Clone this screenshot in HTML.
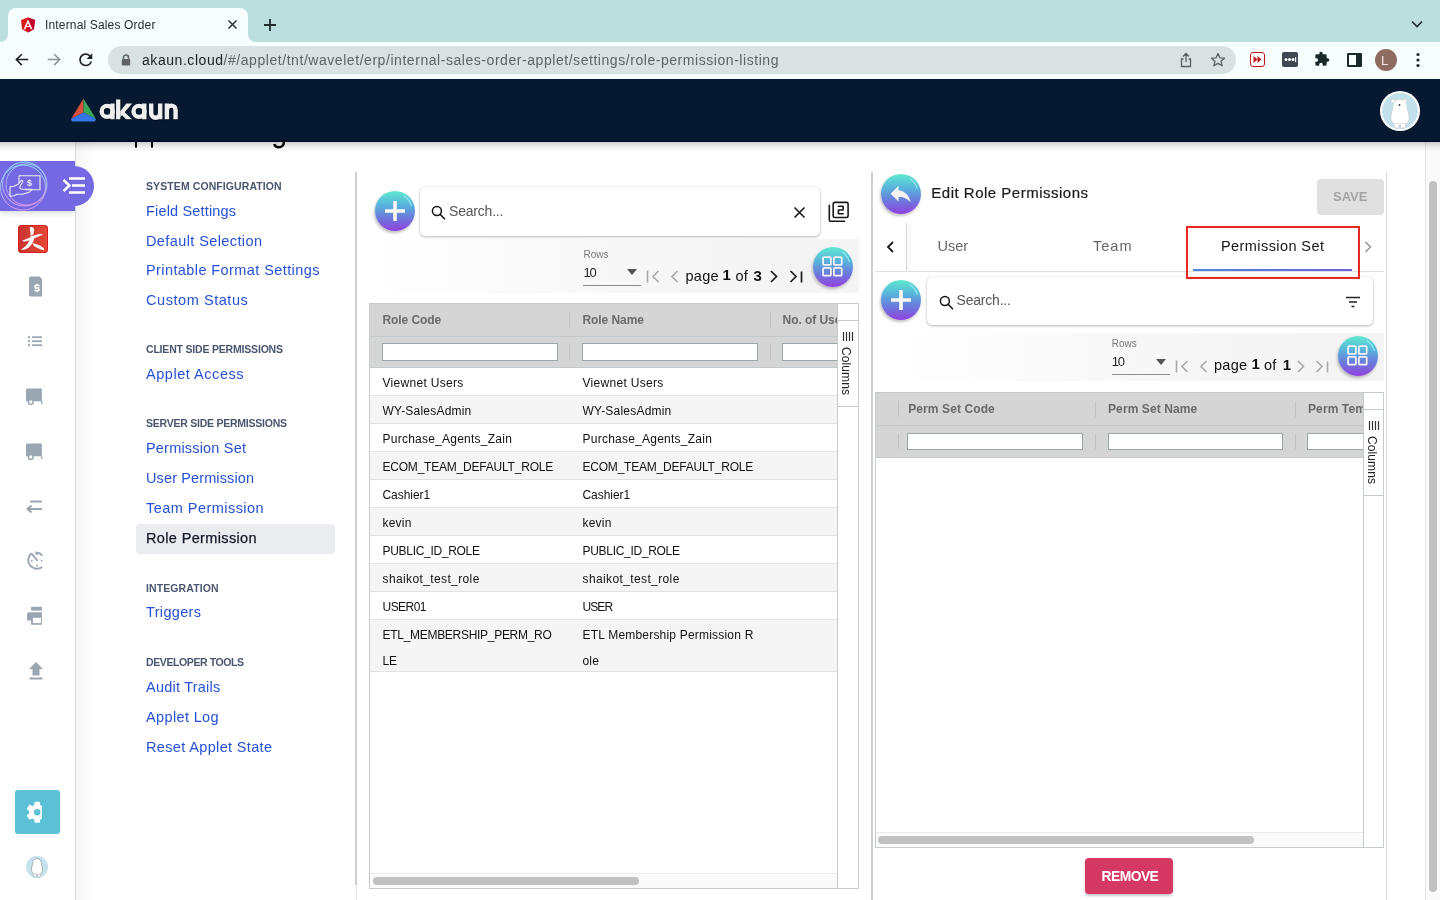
<!DOCTYPE html>
<html><head><meta charset="utf-8">
<style>
*{box-sizing:border-box;margin:0;padding:0}
html,body{width:1440px;height:900px;overflow:hidden;background:#fff;font-family:"Liberation Sans",sans-serif;position:relative}
body{will-change:transform}
.a{position:absolute}
.t{position:absolute;white-space:nowrap;line-height:1}
/* chrome */
#tabbar{left:0;top:0;width:1440px;height:42px;background:#bbdfdf}
#tab{left:8px;top:8px;width:240px;height:36px;background:#f5fdfd;border-radius:8px 8px 0 0}
#toolbar{left:0;top:42px;width:1440px;height:37px;background:#f5fdfd}
#url{left:108px;top:46px;width:1128px;height:28px;background:#d9e2e2;border-radius:14px}
#hdr{left:0;top:79px;width:1440px;height:63.4px;background:linear-gradient(180deg,#071931 0,#071931 95%,#020a24 100%);z-index:5}
#hsh{left:0;top:142.4px;width:1440px;height:10px;background:linear-gradient(180deg,rgba(0,0,0,.2),rgba(0,0,0,.06) 50%,rgba(0,0,0,0));z-index:6}
/* rail */
#rail{left:0;top:142px;width:76px;height:758px;background:#fff;border-right:1px solid #dedede}
.nav{font-size:14.5px;color:#2551d6}
.sec{font-size:10.5px;font-weight:bold;color:#4a5670}
.line{background:#d0d0d0}
.fab{width:40px;height:40px;border-radius:50%;background:linear-gradient(180deg,#5fe9cf 0%,#58b3dc 35%,#6a7ddc 65%,#9141df 100%);box-shadow:-1px 2px 3px rgba(0,0,0,.25)}
.card{background:#fff;border-radius:5px;box-shadow:0 1px 3px rgba(0,0,0,.28),0 0 1px rgba(0,0,0,.15)}
.ph{font-size:14px;color:#555;letter-spacing:-.2px}
.band{background:linear-gradient(90deg,rgba(244,244,244,0) 0%,rgba(244,244,244,.6) 40%,#f4f4f4 85%,#f4f4f4 100%)}
.rows{font-size:10px;color:#777}
.sel{font-size:13px;color:#222;letter-spacing:-1.2px}
.pg{font-size:14.5px;color:#111;letter-spacing:.3px}
.pgb{font-size:15px;font-weight:bold;color:#111}
.grid{border:1px solid #c6cbd0;background:#fff;overflow:hidden}
.gh{background:#d5d5d5}
.tab{font-size:14.5px}

.ghd{font-size:12px;font-weight:bold;color:#6a6a6a}
.gc{font-size:12px;color:#111}
.fin{background:#fff;border:1px solid #9aa6a6}
.colv{font-size:12px;color:#222;writing-mode:vertical-rl;letter-spacing:.1px}


</style></head>
<body>
<!-- ===== browser chrome ===== -->
<div id="tabbar" class="a"></div>
<div id="tab" class="a"></div>
<div class="a" style="left:0;top:34px;width:8px;height:8px;background:#f5fdfd"></div>
<div class="a" style="left:0;top:26px;width:8px;height:16px;background:#bbdfdf;border-radius:0 0 8px 0"></div>
<div class="a" style="left:248px;top:34px;width:8px;height:8px;background:#f5fdfd"></div>
<div class="a" style="left:248px;top:26px;width:8px;height:16px;background:#bbdfdf;border-radius:0 0 0 8px"></div>
<div id="toolbar" class="a"></div>
<!-- angular icon -->
<svg class="a" style="left:20px;top:17px" width="16" height="16" viewBox="0 0 16 16"><path d="M8 0.5L15 3l-1.1 9.3L8 15.6 2.1 12.3 1 3z" fill="#dd1b16"/><path d="M8 0.5L15 3l-1.1 9.3L8 15.6z" fill="#c3002f"/><path d="M8 2.4L3.6 12.2h1.7l.9-2.2h3.7l.9 2.2h1.7zM8 6l1.3 2.9H6.7z" fill="#fff"/></svg>
<div class="t" style="left:45px;top:19px;font-size:12px;letter-spacing:.16px;color:#1f2a2a">Internal Sales Order</div>
<svg class="a" style="left:227px;top:19px" width="11" height="11" viewBox="0 0 11 11"><path d="M1.5 1.5l8 8M9.5 1.5l-8 8" stroke="#1d2b2b" stroke-width="1.4"/></svg>
<svg class="a" style="left:263px;top:18px" width="14" height="14" viewBox="0 0 14 14"><path d="M7 1v12M1 7h12" stroke="#1d2b2b" stroke-width="1.8"/></svg>
<svg class="a" style="left:1410px;top:19px" width="14" height="10" viewBox="0 0 14 10"><path d="M2 2.5l5 5 5-5" stroke="#1d2b2b" stroke-width="1.6" fill="none"/></svg>
<!-- nav buttons -->
<svg class="a" style="left:14px;top:52px" width="16" height="16" viewBox="0 0 16 16"><path d="M14.2 7.6H2.5M7.8 2.2L2.3 7.6l5.5 5.5" stroke="#1f1f1f" stroke-width="1.5" fill="none"/></svg>
<svg class="a" style="left:46px;top:52px" width="16" height="16" viewBox="0 0 16 16"><path d="M1.8 7.6h11.7M8.2 2.2l5.5 5.4-5.5 5.5" stroke="#8a9494" stroke-width="1.5" fill="none"/></svg>
<svg class="a" style="left:76.4px;top:50.4px" width="19.5" height="19.5" viewBox="0 0 24 24"><path d="M17.65 6.35A7.958 7.958 0 0 0 12 4c-4.42 0-7.99 3.58-7.99 8s3.57 8 7.99 8c3.73 0 6.84-2.55 7.73-6h-2.08A5.99 5.99 0 0 1 12 18c-3.31 0-6-2.69-6-6s2.69-6 6-6c1.66 0 3.14.69 4.22 1.78L13 11h7V4l-2.35 2.35z" fill="#1f1f1f"/></svg>
<div id="url" class="a"></div>
<svg class="a" style="left:121px;top:54px" width="10" height="12" viewBox="0 0 10 12"><path d="M2.5 5V3.5a2.5 2.5 0 0 1 5 0V5" stroke="#5f6363" stroke-width="1.5" fill="none"/><rect x="0.8" y="5" width="8.4" height="6.6" rx="1" fill="#5f6363"/></svg>
<div class="t" style="left:142px;top:53px;font-size:14px;letter-spacing:.55px;color:#202424"><span>akaun.cloud</span><span style="color:#5e6464">/#/applet/tnt/wavelet/erp/internal-sales-order-applet/settings/role-permission-listing</span></div>
<svg class="a" style="left:1178px;top:52px" width="16" height="16" viewBox="0 0 16 16"><path d="M8 10V2M5 4.5L8 1.5l3 3M5.5 7H3.5v7.5h9V7h-2" stroke="#5a6060" stroke-width="1.3" fill="none"/></svg>
<svg class="a" style="left:1210px;top:52px" width="16" height="16" viewBox="0 0 16 16"><path d="M8 1.5l1.9 4.3 4.6.4-3.5 3 1.1 4.6L8 11.4l-4.1 2.4 1.1-4.6-3.5-3 4.6-.4z" stroke="#5a6060" stroke-width="1.3" fill="none" stroke-linejoin="round"/></svg>
<!-- extensions -->
<div class="a" style="left:1250px;top:52px;width:15px;height:15px;border:1.6px solid #c5161d;border-radius:3px;background:#fff"></div>
<svg class="a" style="left:1252px;top:55px" width="11" height="9" viewBox="0 0 11 9"><path d="M1.5 1l4 3.5-4 3.5zM5.5 1l4 3.5-4 3.5z" fill="#c5161d"/></svg>
<div class="a" style="left:1282px;top:52px;width:16px;height:15px;background:#3d4852;border-radius:2px"></div>
<svg class="a" style="left:1283px;top:56px" width="14" height="7" viewBox="0 0 14 7"><circle cx="3" cy="3.5" r="1.5" fill="#fff"/><circle cx="6.5" cy="3.5" r="1.5" fill="#fff"/><circle cx="10" cy="3.5" r="1.5" fill="#fff"/><rect x="12" y="1" width="1.2" height="5" fill="#fff"/></svg>
<svg class="a" style="left:1314px;top:51px" width="16" height="16" viewBox="0 0 24 24"><path d="M20.5 11H19V7a2 2 0 0 0-2-2h-4V3.5a2.5 2.5 0 0 0-5 0V5H4a2 2 0 0 0-2 2v3.8h1.5a2.7 2.7 0 0 1 0 5.4H2V20a2 2 0 0 0 2 2h3.8v-1.5a2.7 2.7 0 0 1 5.4 0V22H17a2 2 0 0 0 2-2v-4h1.5a2.5 2.5 0 0 0 0-5z" fill="#1a2a2a"/></svg>
<div class="a" style="left:1347px;top:53px;width:15px;height:14px;border:2px solid #1a2a2a;border-right-width:6px;border-radius:1px"></div>
<div class="a" style="left:1375px;top:49px;width:22px;height:22px;border-radius:50%;background:#8d6b5f"></div>
<div class="t" style="left:1381px;top:54px;font-size:13px;color:#f5ecea">L</div>
<svg class="a" style="left:1415px;top:52px" width="6" height="16" viewBox="0 0 6 16"><circle cx="3" cy="2.5" r="1.6" fill="#1a2a2a"/><circle cx="3" cy="8" r="1.6" fill="#1a2a2a"/><circle cx="3" cy="13.5" r="1.6" fill="#1a2a2a"/></svg>

<!-- ===== app header ===== -->
<div id="hdr" class="a">
  <svg class="a" style="left:70px;top:19px" width="27" height="25" viewBox="0 0 27 25"><path d="M13.5 0.5L1 21 13.5 14.5z" fill="#d8503a"/><path d="M13.5 0.5L26 21 13.5 14.5z" fill="#3aa85a"/><path d="M1 21L13.5 14.5 26 21 25 23.5H2z" fill="#3476e8"/></svg>
  <svg class="a" style="left:98px;top:18px" width="84" height="26" viewBox="0 0 84 26"><g transform="translate(.7 .9)" stroke="#000" fill="#000" opacity=".55">
<circle cx="9.2" cy="14.4" r="5.5" stroke-width="4.4" fill="none"/><path d="M14.5 6.5V22.3" stroke-width="4.4"/>
<path d="M20.2 2.5V22.3" stroke-width="4.3"/><path d="M22.3 14.2L28.3 6.5H34.2L22.3 20.2z" stroke="none"/><path d="M24.6 13.2L34 22.3H28L22.3 16.6z" stroke="none"/>
<circle cx="41" cy="14.4" r="5.5" stroke-width="4.4" fill="none"/><path d="M46.3 6.5V22.3" stroke-width="4.4"/>
<path d="M53.2 6.5V16.2A4.5 4.5 0 0 0 62.2 16.2V6.5M62.2 14V22.3" stroke-width="4.4" fill="none"/>
<path d="M68.9 22.3V6.5M68.9 13A4.35 4.35 0 0 1 77.6 13V22.3" stroke-width="4.4" fill="none"/>
</g><g stroke="#eeeeee" fill="#eeeeee">
<circle cx="9.2" cy="14.4" r="5.5" stroke-width="4.4" fill="none"/><path d="M14.5 6.5V22.3" stroke-width="4.4"/>
<path d="M20.2 2.5V22.3" stroke-width="4.3"/><path d="M22.3 14.2L28.3 6.5H34.2L22.3 20.2z" stroke="none"/><path d="M24.6 13.2L34 22.3H28L22.3 16.6z" stroke="none"/>
<circle cx="41" cy="14.4" r="5.5" stroke-width="4.4" fill="none"/><path d="M46.3 6.5V22.3" stroke-width="4.4"/>
<path d="M53.2 6.5V16.2A4.5 4.5 0 0 0 62.2 16.2V6.5M62.2 14V22.3" stroke-width="4.4" fill="none"/>
<path d="M68.9 22.3V6.5M68.9 13A4.35 4.35 0 0 1 77.6 13V22.3" stroke-width="4.4" fill="none"/>
</g></svg>
  <div class="a" style="left:1380px;top:12px;width:40px;height:40px;border-radius:50%;background:#fff"></div>
  <div class="a" style="left:1382px;top:14px;width:36px;height:36px;border-radius:50%;background:#c2e1ea"></div>
  <svg class="a" style="left:1388px;top:17.5px" width="24" height="34" viewBox="0 0 24 34"><circle cx="5" cy="4" r="2" fill="#fff" stroke="#bbb" stroke-width=".5"/><circle cx="17" cy="4" r="2" fill="#fff" stroke="#bbb" stroke-width=".5"/><path d="M12 2.5c5 0 7 3.5 7 8 0 2 2 5 2 10 0 5-3 8-9 8s-9-3-9-8c0-5 2-8 2-10 0-4.5 2-8 7-8z" fill="#fff" stroke="#ccc" stroke-width=".6"/><rect x="6" y="26.5" width="5" height="4.5" rx="1" fill="#fff" stroke="#bbb" stroke-width=".5"/><rect x="12.5" y="26.5" width="5" height="4.5" rx="1" fill="#fff" stroke="#bbb" stroke-width=".5"/><circle cx="11.5" cy="8" r=".9" fill="#333"/></svg>
</div>

<!-- page title descenders (hidden under header) -->
<div id="hsh" class="a"></div>
<div class="a" style="left:134.6px;top:142.4px;width:2.6px;height:5.3px;background:#000;border-radius:0 0 1px 1px;z-index:7"></div>
<div class="a" style="left:150.9px;top:142.4px;width:2.6px;height:5.3px;background:#000;border-radius:0 0 1px 1px;z-index:7"></div>
<svg class="a" style="left:271px;top:140px;z-index:7" width="16" height="9" viewBox="0 0 16 9"><path d="M12.8 1v1.5c0 2.8-2.2 4.8-5 4.8-2.3 0-4-1.3-4.6-3.2" stroke="#000" stroke-width="2.5" fill="none"/></svg>

<!-- ===== left rail ===== -->
<div id="rail" class="a"></div>
<div class="a" style="left:76px;top:142px;width:22px;height:758px;background:linear-gradient(90deg,rgba(0,0,0,.035),rgba(0,0,0,0))"></div>
<!-- purple applet block -->
<div class="a" style="left:0;top:161px;width:75px;height:50px;background:#7469e3;box-shadow:0 3px 5px rgba(0,0,0,.12)"></div>
<div class="a" style="left:55px;top:166px;width:39px;height:40px;background:#7469e3;border-radius:0 20px 20px 0"></div>
<svg class="a" style="left:0;top:161px" width="52" height="50" viewBox="0 0 52 50" overflow="visible">
 <defs><linearGradient id="rg" x1="0" y1="0" x2="0" y2="1"><stop offset="0" stop-color="#8fe3f5"/><stop offset=".5" stop-color="#a8b8f0"/><stop offset="1" stop-color="#e49cf0"/></linearGradient></defs>
 <circle cx="24.5" cy="23" r="22" fill="none" stroke="url(#rg)" stroke-width="1"/>
 <circle cx="23" cy="26.5" r="22.5" fill="none" stroke="url(#rg)" stroke-width="1"/>
 <circle cx="26.5" cy="23.5" r="20.5" fill="none" stroke="url(#rg)" stroke-width=".9"/>
 <g transform="translate(0 4.3)"> <path d="M19 10.5h21v14H25" stroke="#eee" stroke-width="1.1" fill="none"/>
 <path d="M19 10.5v7" stroke="#eee" stroke-width="1.1"/>
 <path d="M10 21.5l4-.5 4-2 3-3.5c1.2-1 2.3 0 1.5 1.5l-2.5 4c-.5 1.5 .5 3 2.5 3H32l-3 3-6 2h-6l-3 1.5-4 .5z" stroke="#eee" stroke-width="1.1" fill="none" stroke-linejoin="round"/>
 <text x="27" y="21" font-family="Liberation Sans" font-size="9" font-weight="bold" fill="#eee">$</text></g>
</svg>
<svg class="a" style="left:62px;top:177px" width="24" height="17" viewBox="0 0 24 17"><path d="M1.5 3l6 5.5-6 5.5" stroke="#fff" stroke-width="2.4" fill="none"/><path d="M7 1.5h16M10 8.5h13M7 15.5h16" stroke="#fff" stroke-width="2.6"/></svg>
<!-- red app icon -->
<div class="a" style="left:18.4px;top:224.7px;width:29.4px;height:28.4px;border-radius:4px;background:linear-gradient(90deg,#c93232,#e54a35);box-shadow:inset 0 0 0 1px #d81e1e"></div>
<svg class="a" style="left:18.4px;top:224.7px" width="30" height="29" viewBox="0 0 30 29"><path d="M12 2.2C14 1.6 16.4 3 16.1 5L15.3 9.6 12.5 10.2C12.9 7.5 11.6 4.6 12 2.2z" fill="#fff"/><path d="M4.2 15.6C8 14.6 13 12.1 16 10.6 19 9.2 22 8.8 25.2 9 23.6 10.6 20 11.6 17 12.9 14 14.1 10 15.6 6 16.7z" fill="#fff"/><path d="M12.8 10.5L16.6 11C16.1 16 13.6 21 9.1 23.6 7 24.7 5 25.1 3.2 24.9 4.5 23.5 6.6 22 8.6 20 10.6 17.5 12.2 14 12.8 10.5z" fill="#fff"/><path d="M14.4 18.3C18 18.6 22 20.4 24.6 22.3 25.7 23.2 26.4 24.3 26.3 25.3 23 24.9 19.5 23 16.2 21.2z" fill="#fff"/></svg>
<!-- rail icons -->
<svg class="a" style="left:28px;top:275.5px" width="15" height="21" viewBox="0 0 15 21"><path d="M1 2.5a2 2 0 0 1 2-2h8.5l2.5 2.5v17.5H3a2 2 0 0 1-2-2z" fill="#9aa6b2"/><path d="M6.5 9.5h5M7.25 9.5v2.8M6.5 12h5M10.75 12v2.8M6.5 14.5h5M9 7.8v1.7M9 14.5v1.7" stroke="#fff" stroke-width="1.5" fill="none"/></svg>
<svg class="a" style="left:28px;top:335.5px" width="15" height="12" viewBox="0 0 15 12"><rect x="0" y="0.2" width="2" height="2" fill="#9aa6b2"/><rect x="0" y="4.2" width="2" height="2" fill="#9aa6b2"/><rect x="0" y="8.2" width="2" height="2" fill="#9aa6b2"/><rect x="4" y="0.3" width="10" height="1.8" fill="#9aa6b2"/><rect x="4" y="4.3" width="10" height="1.8" fill="#9aa6b2"/><rect x="4" y="8.3" width="10" height="1.8" fill="#9aa6b2"/></svg>
<svg class="a" style="left:25px;top:387.5px" width="18" height="17" viewBox="0 0 18 17"><path d="M1 2a1.5 1.5 0 0 1 1.5-1.5h14.3v12.7H1z" fill="#9aa6b2"/><circle cx="5.8" cy="14" r="2.4" fill="#fff" stroke="#9aa6b2" stroke-width="1.5"/><path d="M16.2 13.2l1 2.8" stroke="#9aa6b2" stroke-width="1.4" fill="none"/></svg>
<svg class="a" style="left:25px;top:442.5px" width="18" height="17" viewBox="0 0 18 17"><path d="M1 2a1.5 1.5 0 0 1 1.5-1.5h14.3v12.7H1z" fill="#9aa6b2"/><circle cx="5.8" cy="14" r="2.4" fill="#fff" stroke="#9aa6b2" stroke-width="1.5"/><path d="M16.2 13.2l1 2.8" stroke="#9aa6b2" stroke-width="1.4" fill="none"/></svg>
<svg class="a" style="left:26px;top:500px" width="17" height="14" viewBox="0 0 17 14"><path d="M4 1.5h12M2 9h14" stroke="#9aa6b2" stroke-width="2"/><path d="M5.5 5.5L1.5 9l4 3.5" stroke="#9aa6b2" stroke-width="2" fill="none"/></svg>
<svg class="a" style="left:27px;top:551px" width="17" height="20" viewBox="0 0 17 20"><path d="M4.6 2.3A8 8 0 1 0 15.2 16" stroke="#9aa6b2" stroke-width="1.9" fill="none"/><path d="M4.6 2.6l6 7.2" stroke="#9aa6b2" stroke-width="1.9"/><path d="M9.5 4V1.5A8 8 0 0 1 15.3 4.6" stroke="#9aa6b2" stroke-width="1.9" fill="none"/><rect x="4" y="8.8" width="1.7" height="1.7" fill="#9aa6b2"/><rect x="9" y="13.8" width="1.7" height="1.7" fill="#9aa6b2"/><rect x="13.8" y="8.8" width="1.6" height="1.7" fill="#9aa6b2"/></svg>
<svg class="a" style="left:26px;top:606px" width="17" height="20" viewBox="0 0 17 20"><rect x="5.1" y="0.8" width="10.8" height="3.8" fill="#9aa6b2"/><path d="M1 8.2a2 2 0 0 1 2-2h12.9v12.5H5.1v-4.2H1z" fill="#9aa6b2"/><rect x="6.9" y="11.8" width="8.1" height="5.3" fill="#fff"/></svg>
<svg class="a" style="left:29px;top:662px" width="14" height="18" viewBox="0 0 14 18"><path d="M7 0L0 7h3.5v6.5h7V7H14z" fill="#9aa6b2"/><rect x="0.5" y="15.5" width="13" height="2" fill="#9aa6b2"/></svg>
<!-- settings button -->
<div class="a" style="left:15px;top:790px;width:45px;height:44px;border-radius:3px;background:#5cc0d6"></div>
<div class="a" style="left:23.7px;top:799.1px;width:18.4px;height:27px;overflow:hidden"><svg width="26.4" height="26.4" viewBox="0 0 24 24"><path d="M19.14 12.94c.04-.3.06-.61.06-.94 0-.32-.02-.64-.07-.94l2.03-1.58c.18-.14.23-.41.12-.61l-1.92-3.32c-.12-.22-.37-.29-.59-.22l-2.39.96c-.5-.38-1.03-.7-1.620-.94l-.36-2.54c-.04-.24-.24-.41-.48-.41h-3.84c-.24 0-.43.17-.47.41l-.36 2.54c-.59.24-1.13.57-1.62.94l-2.39-.96c-.22-.08-.47 0-.59.22L2.74 8.87c-.12.21-.08.47.12.61l2.03 1.58c-.05.3-.09.63-.09.94s.02.64.07.94l-2.03 1.58c-.18.14-.23.41-.12.61l1.92 3.32c.12.22.37.29.59.22l2.39-.96c.5.38 1.03.7 1.62.94l.36 2.54c.05.24.24.41.48.41h3.840c.24 0 .44-.17.47-.41l.36-2.54c.59-.24 1.13-.56 1.62-.94l2.39.96c.22.08.47 0 .59-.22l1.92-3.32c.12-.22.07-.47-.12-.61l-2.01-1.58z" fill="#fff"/><circle cx="12" cy="12" r="2.9" fill="#5cc0d6"/></svg></div>
<div class="a" style="left:26px;top:856px;width:22px;height:22px;border-radius:50%;background:#c5e3ec"></div>
<svg class="a" style="left:30px;top:857px" width="14" height="21" viewBox="0 0 14 21"><path d="M7 1.5c3 0 4.3 2.3 4.3 5 0 1.3 1.2 3 1.2 6 0 3.5-2 5.5-5.5 5.5S1.5 16 1.5 12.5c0-3 1.2-4.7 1.2-6 0-2.7 1.3-5 4.3-5z" fill="#fff" stroke="#777" stroke-width=".5"/><rect x="3.5" y="17" width="3" height="2.8" rx=".6" fill="#fff" stroke="#888" stroke-width=".4"/><rect x="7.5" y="17" width="3" height="2.8" rx=".6" fill="#fff" stroke="#888" stroke-width=".4"/></svg>

<!-- ===== settings nav ===== -->
<div class="a" style="left:355px;top:172px;width:2px;height:713px;background:#cfcfcf"></div>
<div class="a" style="left:356px;top:885px;width:1px;height:15px;background:#e6e6e6"></div>
<div class="t sec" style="left:146px;top:180.8px;letter-spacing:.09px">SYSTEM CONFIGURATION</div>
<div class="t nav" style="left:146px;top:203.5px;letter-spacing:.17px">Field Settings</div>
<div class="t nav" style="left:146px;top:233.5px;letter-spacing:.4px">Default Selection</div>
<div class="t nav" style="left:146px;top:263px;letter-spacing:.41px">Printable Format Settings</div>
<div class="t nav" style="left:146px;top:293.2px;letter-spacing:.56px">Custom Status</div>
<div class="t sec" style="left:146px;top:344.4px;letter-spacing:-.19px">CLIENT SIDE PERMISSIONS</div>
<div class="t nav" style="left:146px;top:366.7px;letter-spacing:.54px">Applet Access</div>
<div class="t sec" style="left:146px;top:418.1px;letter-spacing:-.24px">SERVER SIDE PERMISSIONS</div>
<div class="t nav" style="left:146px;top:440.7px;letter-spacing:.19px">Permission Set</div>
<div class="t nav" style="left:146px;top:471.3px;letter-spacing:.12px">User Permission</div>
<div class="t nav" style="left:146px;top:501.3px;letter-spacing:.46px">Team Permission</div>
<div class="a" style="left:136px;top:524px;width:199px;height:29.6px;border-radius:4px;background:#ebecf0"></div>
<div class="t nav" style="left:146px;top:530.7px;letter-spacing:.36px;color:#111827;-webkit-text-stroke:.25px #111827">Role Permission</div>
<div class="t sec" style="left:146px;top:582.5px;letter-spacing:.1px">INTEGRATION</div>
<div class="t nav" style="left:146px;top:605.3px;letter-spacing:.34px">Triggers</div>
<div class="t sec" style="left:146px;top:656.5px;letter-spacing:-.4px">DEVELOPER TOOLS</div>
<div class="t nav" style="left:146px;top:679.7px;letter-spacing:.23px">Audit Trails</div>
<div class="t nav" style="left:146px;top:710.1px;letter-spacing:.36px">Applet Log</div>
<div class="t nav" style="left:146px;top:739.8px;letter-spacing:.35px">Reset Applet State</div>

<!-- ===== middle panel ===== -->
<div class="a fab" style="left:375px;top:191px"><svg width="40" height="40" viewBox="0 0 40 40"><path d="M20 10v20M10 20h20" stroke="#fbf8f4" stroke-width="3.6"/><path d="M28.8 4.6A17.5 17.5 0 0 1 36.4 14.8" stroke="#a8f5f5" stroke-width="1.1" fill="none" opacity=".85"/></svg></div>
<div class="a card" style="left:420px;top:187px;width:400px;height:49px"></div>
<svg class="a" style="left:431px;top:205px" width="15" height="15" viewBox="0 0 15 15"><circle cx="5.9" cy="6" r="4.5" stroke="#111" stroke-width="1.5" fill="none"/><path d="M9.1 9.3l4.4 4.5" stroke="#111" stroke-width="1.6" stroke-linecap="round"/></svg>
<div class="t ph" style="left:449px;top:204.3px">Search...</div>
<svg class="a" style="left:793px;top:206.3px" width="13" height="13" viewBox="0 0 13 13"><path d="M1.5 1.5l10 10M11.5 1.5l-10 10" stroke="#1a1a1a" stroke-width="1.6"/></svg>
<svg class="a" style="left:827px;top:200px" width="24" height="24" viewBox="0 0 24 24"><path d="M2.3 5.2V20a1.2 1.2 0 0 0 1.2 1.2h14.1" stroke="#1a1a1a" stroke-width="1.6" fill="none" stroke-linecap="round"/><rect x="6.2" y="2.4" width="14.9" height="15.1" rx="1.6" stroke="#1a1a1a" stroke-width="1.6" fill="none"/><path d="M11.4 6.2h4.7v3.8h-4.7v3.7h4.8" stroke="#1a1a1a" stroke-width="1.6" fill="none" stroke-linecap="round" stroke-linejoin="round"/></svg>
<div class="a band" style="left:370px;top:239px;width:489px;height:54px"></div>
<div class="t rows" style="left:583.5px;top:250px">Rows</div>
<div class="t sel" style="left:583.5px;top:266px">10</div>
<svg class="a" style="left:627px;top:269px" width="10" height="6" viewBox="0 0 10 6"><path d="M0 0h10L5 6z" fill="#555"/></svg>
<div class="a" style="left:583px;top:284.5px;width:58px;height:1px;background:#8a8a8a"></div>
<svg class="a" style="left:646px;top:270px" width="14" height="13" viewBox="0 0 14 13"><path d="M1.5 .5v12" stroke="#a8a8a8" stroke-width="1.6"/><path d="M12.5 1l-5.5 5.5 5.5 5.5" stroke="#a8a8a8" stroke-width="1.6" fill="none"/></svg>
<svg class="a" style="left:670px;top:270px" width="9" height="13" viewBox="0 0 9 13"><path d="M7.5 1l-5.5 5.5 5.5 5.5" stroke="#a8a8a8" stroke-width="1.6" fill="none"/></svg>
<div class="t pg" style="left:685.5px;top:269px">page</div>
<div class="t pgb" style="left:722.5px;top:266.5px">1</div>
<div class="t pg" style="left:735.5px;top:269px">of</div>
<div class="t pgb" style="left:753.5px;top:268px">3</div>
<svg class="a" style="left:769px;top:270px" width="10" height="13" viewBox="0 0 10 13"><path d="M2 1l5.5 5.5L2 12" stroke="#1a1a1a" stroke-width="1.7" fill="none"/></svg>
<svg class="a" style="left:789px;top:270px" width="15" height="13" viewBox="0 0 15 13"><path d="M1.5 1L7 6.5 1.5 12" stroke="#1a1a1a" stroke-width="1.7" fill="none"/><path d="M12.5 1.5v11" stroke="#1a1a1a" stroke-width="1.7"/></svg>
<div class="a fab" style="left:813px;top:247px"><svg width="40" height="40" viewBox="0 0 40 40"><rect x="10.1" y="10.1" width="7.8" height="7.8" rx="1" stroke="#f2f2f6" stroke-width="1.8" fill="none"/><rect x="20.9" y="10.1" width="7.8" height="7.8" rx="1" stroke="#f2f2f6" stroke-width="1.8" fill="none"/><rect x="10.1" y="20.9" width="7.8" height="7.8" rx="1" stroke="#f2f2f6" stroke-width="1.8" fill="none"/><rect x="20.9" y="20.9" width="7.8" height="7.8" rx="1" stroke="#f2f2f6" stroke-width="1.8" fill="none"/><path d="M28.8 4.6A17.5 17.5 0 0 1 36.4 14.8" stroke="#a8f5f5" stroke-width="1.1" fill="none" opacity=".85"/></svg></div>

<!-- grid 1 -->
<div class="a grid" style="left:369px;top:302.5px;width:490px;height:586px">
<div class="a" style="left:0;top:0;width:466.5px;height:100%;overflow:hidden">
<div class="a gh" style="left:0;top:0;width:600px;height:32.3px"></div>
<div class="a" style="left:0;top:32.3px;width:600px;height:1px;background:#c3c8cc"></div>
<div class="a gh" style="left:0;top:33.3px;width:600px;height:30.4px"></div>
<div class="a" style="left:0;top:63.7px;width:600px;height:1px;background:#c3c8cc"></div>
<div class="a" style="left:199.4px;top:8.0px;width:1px;height:16px;background:#c2c2c2"></div>
<div class="a" style="left:199.4px;top:40.5px;width:1px;height:15.5px;background:#c2c2c2"></div>
<div class="a" style="left:399.6px;top:8.0px;width:1px;height:16px;background:#c2c2c2"></div>
<div class="a" style="left:399.6px;top:40.5px;width:1px;height:15.5px;background:#c2c2c2"></div>
<div class="t ghd" style="left:12.5px;top:10.54px;letter-spacing:-.07px">Role Code</div>
<div class="t ghd" style="left:212.5px;top:10.54px;letter-spacing:-.07px">Role Name</div>
<div class="t ghd" style="left:412.6px;top:10.54px;letter-spacing:-.07px">No. of Users</div>
<div class="a fin" style="left:12px;top:39.5px;width:175.8px;height:17.8px"></div>
<div class="a fin" style="left:212.2px;top:39.5px;width:175.6px;height:17.8px"></div>
<div class="a fin" style="left:412.2px;top:39.5px;width:177.8px;height:17.8px"></div>
<div class="a" style="left:0;top:64.7px;width:600px;height:27.6px;background:#fff;border-bottom:1px solid #e2e2e2"></div>
<div class="t gc" style="left:12.5px;top:73.04px;letter-spacing:0.3px">Viewnet Users</div>
<div class="t gc" style="left:212.5px;top:73.04px;letter-spacing:0.3px">Viewnet Users</div>
<div class="a" style="left:0;top:92.7px;width:600px;height:27.6px;background:#f5f5f5;border-bottom:1px solid #e2e2e2"></div>
<div class="t gc" style="left:12.5px;top:101.04px;letter-spacing:0.21px">WY-SalesAdmin</div>
<div class="t gc" style="left:212.5px;top:101.04px;letter-spacing:0.21px">WY-SalesAdmin</div>
<div class="a" style="left:0;top:120.7px;width:600px;height:27.6px;background:#fff;border-bottom:1px solid #e2e2e2"></div>
<div class="t gc" style="left:12.5px;top:129.04px;letter-spacing:0.24px">Purchase_Agents_Zain</div>
<div class="t gc" style="left:212.5px;top:129.04px;letter-spacing:0.24px">Purchase_Agents_Zain</div>
<div class="a" style="left:0;top:148.7px;width:600px;height:27.6px;background:#f5f5f5;border-bottom:1px solid #e2e2e2"></div>
<div class="t gc" style="left:12.5px;top:157.04px;letter-spacing:-0.21px">ECOM_TEAM_DEFAULT_ROLE</div>
<div class="t gc" style="left:212.5px;top:157.04px;letter-spacing:-0.21px">ECOM_TEAM_DEFAULT_ROLE</div>
<div class="a" style="left:0;top:176.7px;width:600px;height:27.6px;background:#fff;border-bottom:1px solid #e2e2e2"></div>
<div class="t gc" style="left:12.5px;top:185.04px;letter-spacing:-0.05px">Cashier1</div>
<div class="t gc" style="left:212.5px;top:185.04px;letter-spacing:-0.05px">Cashier1</div>
<div class="a" style="left:0;top:204.7px;width:600px;height:27.6px;background:#f5f5f5;border-bottom:1px solid #e2e2e2"></div>
<div class="t gc" style="left:12.5px;top:213.04px;letter-spacing:0.22px">kevin</div>
<div class="t gc" style="left:212.5px;top:213.04px;letter-spacing:0.22px">kevin</div>
<div class="a" style="left:0;top:232.7px;width:600px;height:27.6px;background:#fff;border-bottom:1px solid #e2e2e2"></div>
<div class="t gc" style="left:12.5px;top:241.04px;letter-spacing:-0.3px">PUBLIC_ID_ROLE</div>
<div class="t gc" style="left:212.5px;top:241.04px;letter-spacing:-0.3px">PUBLIC_ID_ROLE</div>
<div class="a" style="left:0;top:260.7px;width:600px;height:27.6px;background:#f5f5f5;border-bottom:1px solid #e2e2e2"></div>
<div class="t gc" style="left:12.5px;top:269.04px;letter-spacing:0.38px">shaikot_test_role</div>
<div class="t gc" style="left:212.5px;top:269.04px;letter-spacing:0.38px">shaikot_test_role</div>
<div class="a" style="left:0;top:288.7px;width:600px;height:27.6px;background:#fff;border-bottom:1px solid #e2e2e2"></div>
<div class="t gc" style="left:12.5px;top:297.04px;letter-spacing:-0.54px">USER01</div>
<div class="t gc" style="left:212.5px;top:297.04px;letter-spacing:-0.9px">USER</div>
<div class="a" style="left:0;top:316.7px;width:600px;height:51.8px;background:#f5f5f5;border-bottom:1px solid #e2e2e2"></div>
<div class="t gc" style="left:12.5px;top:325.04px;letter-spacing:-.29px">ETL_MEMBERSHIP_PERM_RO</div>
<div class="t gc" style="left:12.5px;top:351.04px;letter-spacing:-.29px">LE</div>
<div class="t gc" style="left:212.5px;top:325.04px;letter-spacing:.2px">ETL Membership Permission R</div>
<div class="t gc" style="left:212.5px;top:351.04px;letter-spacing:.2px">ole</div>
<div class="a" style="left:0;top:569.5px;width:600px;height:16px;background:#fafafa;border-top:1px solid #ececec"></div>
<div class="a" style="left:3px;top:573.5px;width:266px;height:8px;border-radius:4px;background:#c1c1c1"></div>
</div>
<div class="a" style="left:466.5px;top:0;width:22px;height:100%;background:#fff;border-left:1px solid #c6cbd0"></div>
<div class="a" style="left:466.5px;top:16.3px;width:22px;height:1px;background:#c6cbd0"></div>
<div class="a" style="left:466.5px;top:102.0px;width:22px;height:1px;background:#c6cbd0"></div>
<svg class="a" style="left:472px;top:28.5px" width="12" height="9" viewBox="0 0 12 9"><path d="M1.5 0v9M4.5 0v9M7.5 0v9M10.5 0v9" stroke="#333" stroke-width="1.2"/></svg>
<div class="t colv" style="left:470.2px;top:43.2px">Columns</div>
</div>
<!-- ===== right panel ===== -->
<div class="a" style="left:871px;top:172px;width:1.5px;height:728px;background:#cfcfcf"></div>
<div class="a" style="left:1386px;top:172px;width:1px;height:728px;background:#dcdcdc"></div>
<div class="a fab" style="left:881px;top:174px"><svg width="40" height="40" viewBox="0 0 40 40"><path d="M28.8 4.6A17.5 17.5 0 0 1 36.4 14.8" stroke="#a8f5f5" stroke-width="1.1" fill="none" opacity=".85"/><g transform="translate(6.3 6.2) scale(1.12)"><path d="M10 9V5l-7 7 7 7v-4.1c5 0 8.5 1.6 11 5.1-1-5-4-10-11-11z" fill="#f4f2f0"/></g></svg></div>
<div class="t" style="left:931.3px;top:185.3px;font-size:15px;color:#1a1a1a;letter-spacing:.5px;-webkit-text-stroke:.2px #1a1a1a">Edit Role Permissions</div>
<div class="a" style="left:1317px;top:179px;width:67px;height:35.5px;border-radius:4px;background:#e0e0e0"></div>
<div class="t" style="left:1333px;top:190.2px;font-size:13px;font-weight:bold;color:#a3a3a3;letter-spacing:0px">SAVE</div>
<!-- tabs -->
<svg class="a" style="left:886px;top:241px" width="9" height="12" viewBox="0 0 9 12"><path d="M7 1L2 6l5 5" stroke="#1a1a1a" stroke-width="1.8" fill="none"/></svg>
<div class="a" style="left:906px;top:223px;width:1px;height:48px;background:#d8d8d8;box-shadow:2px 0 4px rgba(0,0,0,.12)"></div>
<div class="a" style="left:875px;top:271px;width:509px;height:1px;background:#e1e1e1"></div>
<div class="t tab" style="left:937.5px;top:239.2px;color:#666;letter-spacing:0px">User</div>
<div class="t tab" style="left:1093px;top:239.2px;color:#666;letter-spacing:1px">Team</div>
<div class="t tab" style="left:1221px;top:239.2px;color:#151515;letter-spacing:.42px">Permission Set</div>
<div class="a" style="left:1192.6px;top:268.8px;width:159.4px;height:2.2px;background:linear-gradient(90deg,#4b86e0,#6d62e0)"></div>
<div class="a" style="left:1186px;top:225.8px;width:174px;height:53px;border:2px solid #e8291f;z-index:3"></div>
<svg class="a" style="left:1363px;top:241px" width="10" height="12" viewBox="0 0 10 12"><path d="M2.5 1l5 5-5 5" stroke="#9a9a9a" stroke-width="1.6" fill="none"/></svg>
<!-- search -->
<div class="a fab" style="left:881px;top:280px"><svg width="40" height="40" viewBox="0 0 40 40"><path d="M20 10v20M10 20h20" stroke="#fbf8f4" stroke-width="3.6"/><path d="M28.8 4.6A17.5 17.5 0 0 1 36.4 14.8" stroke="#a8f5f5" stroke-width="1.1" fill="none" opacity=".85"/></svg></div>
<div class="a card" style="left:927px;top:276.5px;width:446px;height:48px"></div>
<svg class="a" style="left:939px;top:294.5px" width="15" height="15" viewBox="0 0 15 15"><circle cx="5.9" cy="6" r="4.5" stroke="#111" stroke-width="1.5" fill="none"/><path d="M9.1 9.3l4.4 4.5" stroke="#111" stroke-width="1.6" stroke-linecap="round"/></svg>
<div class="t ph" style="left:956.5px;top:292.9px">Search...</div>
<svg class="a" style="left:1345px;top:296px" width="16" height="12" viewBox="0 0 16 12"><path d="M1 1.5h14M4 6h8M6.5 10.5h3" stroke="#222" stroke-width="1.7"/></svg>
<div class="a band" style="left:892px;top:333px;width:492px;height:48px"></div>
<div class="t rows" style="left:1111.8px;top:338.7px">Rows</div>
<div class="t sel" style="left:1111.8px;top:355.2px">10</div>
<svg class="a" style="left:1155.5px;top:359px" width="10" height="6" viewBox="0 0 10 6"><path d="M0 0h10L5 6z" fill="#555"/></svg>
<div class="a" style="left:1111.5px;top:373.7px;width:58px;height:1px;background:#8a8a8a"></div>
<svg class="a" style="left:1174.5px;top:359.5px" width="14" height="13" viewBox="0 0 14 13"><path d="M1.5 .5v12" stroke="#a8a8a8" stroke-width="1.6"/><path d="M12.5 1l-5.5 5.5 5.5 5.5" stroke="#a8a8a8" stroke-width="1.6" fill="none"/></svg>
<svg class="a" style="left:1199px;top:359.5px" width="9" height="13" viewBox="0 0 9 13"><path d="M7.5 1l-5.5 5.5 5.5 5.5" stroke="#a8a8a8" stroke-width="1.6" fill="none"/></svg>
<div class="t pg" style="left:1214px;top:358.3px">page</div>
<div class="t pgb" style="left:1251.5px;top:355.8px">1</div>
<div class="t pg" style="left:1264px;top:358.3px">of</div>
<div class="t pgb" style="left:1282.8px;top:357.3px">1</div>
<svg class="a" style="left:1295.5px;top:359.5px" width="10" height="13" viewBox="0 0 10 13"><path d="M2 1l5.5 5.5L2 12" stroke="#a8a8a8" stroke-width="1.6" fill="none"/></svg>
<svg class="a" style="left:1315px;top:359.5px" width="15" height="13" viewBox="0 0 15 13"><path d="M1.5 1L7 6.5 1.5 12" stroke="#a8a8a8" stroke-width="1.6" fill="none"/><path d="M12.5 1.5v11" stroke="#a8a8a8" stroke-width="1.6"/></svg>
<div class="a fab" style="left:1338px;top:336px"><svg width="40" height="40" viewBox="0 0 40 40"><rect x="10.1" y="10.1" width="7.8" height="7.8" rx="1" stroke="#f2f2f6" stroke-width="1.8" fill="none"/><rect x="20.9" y="10.1" width="7.8" height="7.8" rx="1" stroke="#f2f2f6" stroke-width="1.8" fill="none"/><rect x="10.1" y="20.9" width="7.8" height="7.8" rx="1" stroke="#f2f2f6" stroke-width="1.8" fill="none"/><rect x="20.9" y="20.9" width="7.8" height="7.8" rx="1" stroke="#f2f2f6" stroke-width="1.8" fill="none"/><path d="M28.8 4.6A17.5 17.5 0 0 1 36.4 14.8" stroke="#a8f5f5" stroke-width="1.1" fill="none" opacity=".85"/></svg></div>
<!-- grid 2 -->
<div class="a grid" style="left:874.5px;top:391.5px;width:509.3px;height:456.5px">
<div class="a" style="left:0;top:0;width:487.0px;height:100%;overflow:hidden">
<div class="a gh" style="left:0;top:0;width:600px;height:32.3px"></div>
<div class="a" style="left:0;top:32.3px;width:600px;height:1px;background:#c3c8cc"></div>
<div class="a gh" style="left:0;top:33.3px;width:600px;height:30.9px"></div>
<div class="a" style="left:0;top:64.2px;width:600px;height:1px;background:#c3c8cc"></div>
<div class="a" style="left:22.9px;top:8.0px;width:1px;height:16px;background:#c2c2c2"></div>
<div class="a" style="left:22.9px;top:41.0px;width:1px;height:15.5px;background:#c2c2c2"></div>
<div class="a" style="left:219.5px;top:8.0px;width:1px;height:16px;background:#c2c2c2"></div>
<div class="a" style="left:219.5px;top:41.0px;width:1px;height:15.5px;background:#c2c2c2"></div>
<div class="a" style="left:419.3px;top:8.0px;width:1px;height:16px;background:#c2c2c2"></div>
<div class="a" style="left:419.3px;top:41.0px;width:1px;height:15.5px;background:#c2c2c2"></div>
<div class="t ghd" style="left:32.7px;top:10.24px;letter-spacing:.1px">Perm Set Code</div>
<div class="t ghd" style="left:232.5px;top:10.24px;letter-spacing:.1px">Perm Set Name</div>
<div class="t ghd" style="left:432.5px;top:10.24px;letter-spacing:.1px">Perm Template</div>
<div class="a fin" style="left:31.8px;top:40.2px;width:176.0px;height:17.4px"></div>
<div class="a fin" style="left:232.5px;top:40.2px;width:175.3px;height:17.4px"></div>
<div class="a fin" style="left:431.8px;top:40.2px;width:172.7px;height:17.4px"></div>
<div class="a" style="left:0;top:439.5px;width:600px;height:16px;background:#fafafa;border-top:1px solid #ececec"></div>
<div class="a" style="left:2.5px;top:443.5px;width:376px;height:7.6px;border-radius:4px;background:#c1c1c1"></div>
</div>
<div class="a" style="left:487.0px;top:0;width:22px;height:100%;background:#fff;border-left:1px solid #c6cbd0"></div>
<div class="a" style="left:487.0px;top:16.5px;width:22px;height:1px;background:#c6cbd0"></div>
<div class="a" style="left:487.0px;top:102.1px;width:22px;height:1px;background:#c6cbd0"></div>
<svg class="a" style="left:492.5px;top:28.5px" width="12" height="9" viewBox="0 0 12 9"><path d="M1.5 0v9M4.5 0v9M7.5 0v9M10.5 0v9" stroke="#333" stroke-width="1.2"/></svg>
<div class="t colv" style="left:490.2px;top:43.8px">Columns</div>
</div>
<div class="a" style="left:1085.3px;top:858.2px;width:87.7px;height:35.7px;border-radius:4px;background:#d63864;box-shadow:0 2px 3px rgba(0,0,0,.22)"></div>
<div class="t" style="left:1101.5px;top:870.2px;font-size:13.8px;font-weight:bold;color:#fff;letter-spacing:-.5px">REMOVE</div>
<!-- page scrollbar -->
<div class="a" style="left:1425px;top:142px;width:15px;height:758px;background:#fafafa;border-left:1px solid #e6e6e6"></div>
<div class="a" style="left:1429px;top:180.5px;width:7.5px;height:711.5px;border-radius:4px;background:#c1c1c1"></div>
</body></html>
